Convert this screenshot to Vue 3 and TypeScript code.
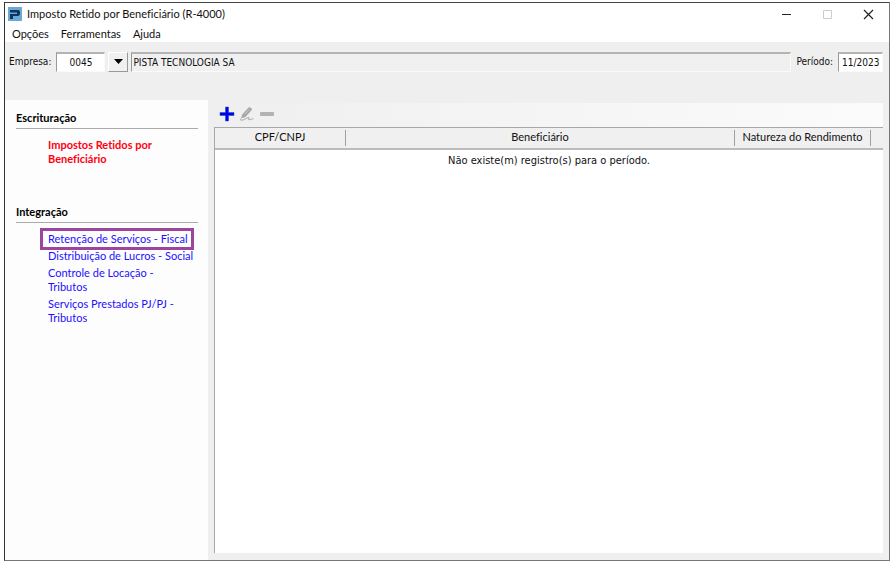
<script setup lang="ts">
import { ref } from 'vue'

interface LinkItem {
  label: string
  highlighted?: boolean
}

const menus: string[] = ['Opções', 'Ferramentas', 'Ajuda']
const company = ref('0045')
const companyName = ref('PISTA TECNOLOGIA SA')
const period = ref('11/2023')
const integrations: LinkItem[] = [
  { label: 'Retenção de Serviços - Fiscal', highlighted: true },
  { label: 'Distribuição de Lucros - Social' },
  { label: 'Controle de Locação - Tributos' },
  { label: 'Serviços Prestados PJ/PJ - Tributos' },
]
</script>

<template>
  <div class="desktop">
    <div class="window">
      <header class="titlebar">
        <svg class="logo" width="14" height="14" viewBox="0 0 14 14" aria-hidden="true">
          <rect width="14" height="14" fill="#68a9d8" />
          <path d="M2 3H10Q12 3 12 5V6.500Q12 9 9.500 9H5V12H2V7H9V5.500H2Z" fill="#10345c" />
        </svg>
        <h1>Imposto Retido por Beneficiário (R-4000)</h1>
        <div class="controls">
          <button type="button" aria-label="Minimizar">
            <svg width="11" height="11" viewBox="0 0 11 11"><path d="M1 5.500H10" stroke="#222" /></svg>
          </button>
          <button type="button" aria-label="Maximizar" disabled>
            <svg width="11" height="11" viewBox="0 0 11 11"><path d="M1.500 1.500H9.500V9.500H1.500Z" fill="none" stroke="#ccc" /></svg>
          </button>
          <button type="button" aria-label="Fechar">
            <svg width="11" height="11" viewBox="0 0 11 11"><path d="M1 1L10 10M10 1L1 10" stroke="#222" stroke-width="1.200" /></svg>
          </button>
        </div>
      </header>

      <nav class="menubar">
        <button v-for="menu in menus" :key="menu" type="button">{{ menu }}</button>
      </nav>

      <form class="filters" @submit.prevent>
        <label for="company">Empresa:</label>
        <input id="company" v-model="company" class="code" />
        <button type="button" class="drop" aria-label="Selecionar empresa">
          <svg width="9" height="5" viewBox="0 0 9 5"><path d="M0 0H9L4.500 5Z" fill="#000" /></svg>
        </button>
        <input v-model="companyName" class="name" aria-label="Nome da empresa" readonly />
        <label for="period">Período:</label>
        <input id="period" v-model="period" class="period" />
      </form>

      <div class="body">
        <aside class="sidebar">
          <section class="first">
            <h2>Escrituração</h2>
            <ul>
              <li><a href="#" class="current">Impostos Retidos por Beneficiário</a></li>
            </ul>
          </section>
          <section>
            <h2>Integração</h2>
            <ul>
              <li v-for="item in integrations" :key="item.label" :class="{ highlighted: item.highlighted }">
                <a href="#">{{ item.label }}</a>
              </li>
            </ul>
          </section>
        </aside>

        <main class="content">
          <div class="toolbar">
            <button type="button" aria-label="Incluir">
              <svg width="16" height="16" viewBox="0 0 16 16">
                <path d="M6.500 1H9.500V6.500H15V9.500H9.500V15H6.500V9.500H1V6.500H6.500Z" fill="#0000f0" stroke="#1450b0" stroke-width=".5" />
              </svg>
            </button>
            <button type="button" aria-label="Editar" disabled>
              <svg width="16" height="16" viewBox="0 0 16 16">
                <path d="M2 12.500L3.200 8.500L9.500 1.500Q12.500 .5 13 3.800L6.500 11Z" fill="#a8a8a8" />
                <path d="M6 8L10 3.500" stroke="#c8c8c8" stroke-width="1" />
                <path d="M1.500 12.500Q1 14.800 4 14L9 11.500Q10.500 11.200 9.500 13Q10 14.500 14.500 12.500" fill="none" stroke="#b8b8b8" stroke-width="1.300" />
              </svg>
            </button>
            <button type="button" aria-label="Excluir" disabled>
              <svg width="16" height="16" viewBox="0 0 16 16"><rect x="1" y="6" width="14" height="4" rx="1" fill="#b2b2b2" /></svg>
            </button>
          </div>
          <div class="grid">
            <table>
              <colgroup>
                <col class="col-id" /><col /><col class="col-nature" /><col class="col-end" />
              </colgroup>
              <thead>
                <tr>
                  <th scope="col"><span>CPF/CNPJ</span></th>
                  <th scope="col"><span>Beneficiário</span></th>
                  <th scope="col"><span>Natureza do Rendimento</span></th>
                  <td></td>
                </tr>
              </thead>
              <tbody>
                <tr><td colspan="4">Não existe(m) registro(s) para o período.</td></tr>
              </tbody>
            </table>
          </div>
        </main>
      </div>
    </div>
  </div>
</template>

<style>
body {
  margin: 0;
  background: #fff;
}
</style>

<style scoped>
* {
  box-sizing: border-box;
}

.desktop {
  display: flex;
  min-height: 100vh;
  padding: 2px 5px 5px 4px;
  font: 11px/14px Lato, "Open Sans", sans-serif;
  font-variant-ligatures: none;
  color: #111;
}

.window {
  flex: 1;
  min-width: 0;
  display: flex;
  flex-direction: column;
  background: #efefef;
  border: 1px solid #777;
  border-left-color: #2b333b;
  border-top-color: #444;
}

button,
input {
  font: inherit;
  color: inherit;
  margin: 0;
}

button {
  padding: 0;
  border: 0;
  background: none;
}

button svg {
  display: block;
}

.titlebar {
  display: flex;
  align-items: center;
  height: 22px;
  padding-left: 3px;
  background: #fff;
}

h1 {
  margin: 0 auto 0 5px;
  font-size: 11px;
  font-weight: 400;
}

.controls {
  display: flex;
  gap: 30px;
  padding-right: 15px;
}

.menubar {
  display: flex;
  gap: 12px;
  height: 17px;
  padding-left: 7px;
  background: #fff;
}

.filters {
  display: flex;
  align-items: center;
  height: 58px;
  padding: 0 6px 19px 4px;
  font-family: "DejaVu Sans Condensed", "Open Sans", sans-serif;
  font-size: 10px;
}

.filters input {
  height: 20px;
  padding: 0 1px;
  border: 1px solid #fafafa;
  border-top: 2px solid #b4b4b4;
  border-left-color: #999;
  background: #fff;
  min-width: 0;
  outline: none;
}

.filters .code {
  width: 49px;
  margin-left: 5px;
  text-align: center;
}

.drop {
  display: flex;
  align-items: center;
  justify-content: center;
  width: 20px;
  height: 20px;
  margin: 0 3px;
  background: #f0f0f0;
  border: 1px solid #fff;
  border-right-color: #999;
  border-bottom-color: #999;
}

.filters .name {
  flex: 1;
  margin-right: 5px;
  background: #f0f0f0;
}

.filters .period {
  width: 45px;
  margin-left: 5px;
  padding-left: 3px;
}

.body {
  flex: 1;
  display: flex;
}

.sidebar {
  width: 203px;
  padding: 11px 10px 11px 11px;
  background: #fdfdfd;
}

.first {
  min-height: 94px;
}

h2 {
  margin: 0;
  padding-bottom: 3px;
  border-bottom: 1px solid #aaa;
  font-size: 11px;
  line-height: 14px;
  color: #000;
}

ul {
  display: flex;
  flex-direction: column;
  gap: 3px;
  margin: 9px 0 0;
  padding: 0 0 0 32px;
  list-style: none;
}

a {
  display: block;
  width: 146px;
  color: #1c10ff;
  text-decoration: none;
}

a.current {
  width: 120px;
  color: #ff0010;
  font-weight: 700;
}

.highlighted {
  position: relative;
}

.highlighted::before {
  content: "";
  position: absolute;
  inset: -4px 4px -4px -8px;
  border: 3px solid #9c459c;
}

.content {
  flex: 1;
  min-width: 0;
  display: flex;
  flex-direction: column;
  padding: 3px 6px 7px;
}

.toolbar {
  display: flex;
  align-items: center;
  gap: 4px;
  height: 24px;
  padding: 0 0 2px 5px;
  background: linear-gradient(90deg, #efefef, #fbfbfb);
}

.grid {
  flex: 1;
  background: #fff;
  border-left: 1px solid #a8a8a8;
  border-top: 1px solid #a8a8a8;
}

table {
  width: 100%;
  table-layout: fixed;
  border-collapse: separate;
  border-spacing: 0;
}

.col-id {
  width: 131px;
}

.col-nature {
  width: 136px;
}

.col-end {
  width: 12px;
}

thead th,
thead td {
  height: 22px;
  padding: 2px 0;
  background: #f0f0f0;
  border-bottom: 2px solid #bcbcbc;
  font-weight: 400;
}

th span {
  display: block;
  height: 16px;
  line-height: 14px;
  border-right: 1px solid #a0a0a0;
}

tbody td {
  padding: 4px 0;
  text-align: center;
  font-family: "DejaVu Sans Condensed", "Open Sans", sans-serif;
}
</style>
